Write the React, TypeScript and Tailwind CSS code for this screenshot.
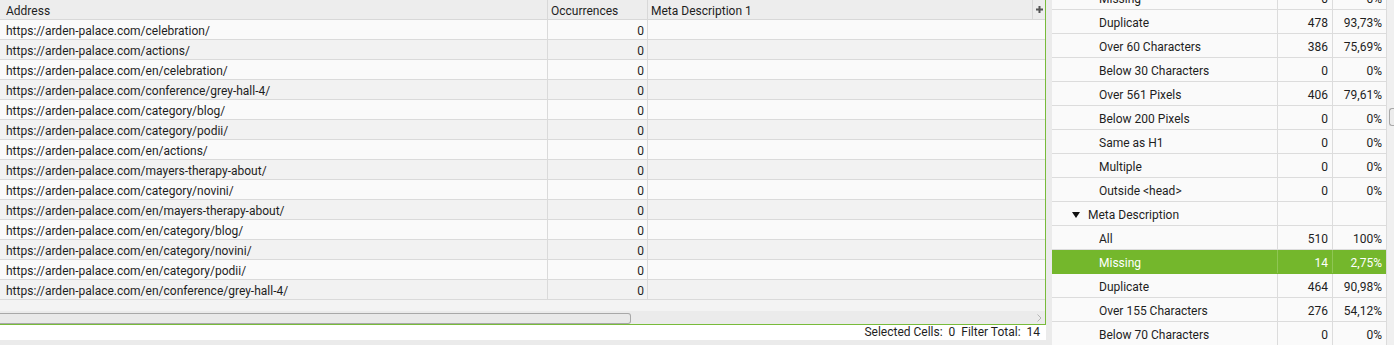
import React from "react";

const urls = [
  "https://arden-palace.com/celebration/",
  "https://arden-palace.com/actions/",
  "https://arden-palace.com/en/celebration/",
  "https://arden-palace.com/conference/grey-hall-4/",
  "https://arden-palace.com/category/blog/",
  "https://arden-palace.com/category/podii/",
  "https://arden-palace.com/en/actions/",
  "https://arden-palace.com/mayers-therapy-about/",
  "https://arden-palace.com/category/novini/",
  "https://arden-palace.com/en/mayers-therapy-about/",
  "https://arden-palace.com/en/category/blog/",
  "https://arden-palace.com/en/category/novini/",
  "https://arden-palace.com/en/category/podii/",
  "https://arden-palace.com/en/conference/grey-hall-4/",
];

type R = { label: string; count?: string; pct?: string; kind?: "child" | "group" | "sel" };

const rows: R[] = [
  { label: "Missing", count: "0", pct: "0%" },
  { label: "Duplicate", count: "478", pct: "93,73%" },
  { label: "Over 60 Characters", count: "386", pct: "75,69%" },
  { label: "Below 30 Characters", count: "0", pct: "0%" },
  { label: "Over 561 Pixels", count: "406", pct: "79,61%" },
  { label: "Below 200 Pixels", count: "0", pct: "0%" },
  { label: "Same as H1", count: "0", pct: "0%" },
  { label: "Multiple", count: "0", pct: "0%" },
  { label: "Outside <head>", count: "0", pct: "0%" },
  { label: "Meta Description", kind: "group" },
  { label: "All", count: "510", pct: "100%" },
  { label: "Missing", count: "14", pct: "2,75%", kind: "sel" },
  { label: "Duplicate", count: "464", pct: "90,98%" },
  { label: "Over 155 Characters", count: "276", pct: "54,12%" },
  { label: "Below 70 Characters", count: "0", pct: "0%" },
];

export default function App() {
  return (
    <div className="flex h-[345px] w-[1394px] overflow-hidden bg-[#ebebeb] font-['Roboto',sans-serif] text-[12px] text-[#1e1e1e]">
      {/* Left panel */}
      <div className="flex w-[1046px] flex-col">
        <div className="flex h-[325px] flex-col border-r border-b border-[#78bb3a] bg-[#f3f3f3]">
          {/* header */}
          <div className="flex h-[20px] border-b border-[#d8d8d8] bg-[#ededed] leading-[16px]">
            <div className="w-[548px] border-r border-[#d8d8d8] pt-[3px] pl-[6px]">Address</div>
            <div className="w-[100px] border-r border-[#d8d8d8] pt-[3px] pl-[3px]">Occurrences</div>
            <div className="w-[385px] border-r border-[#d8d8d8] pt-[3px] pl-[3px]">Meta Description 1</div>
            <div className="flex flex-1 items-center justify-center">
              <svg width="7" height="7" viewBox="0 0 7 7">
                <rect x="2.5" y="0" width="2" height="7" fill="#555" />
                <rect x="0" y="2.5" width="7" height="2" fill="#555" />
              </svg>
            </div>
          </div>
          {urls.map((u, i) => (
            <div
              key={i}
              className={`flex h-[20px] border-b border-[#dadada] leading-[16px] ${i % 2 === 0 ? "bg-[#fafafa]" : "bg-[#f2f2f2]"}`}
            >
              <div className="w-[548px] border-r border-[#dadada] pt-[3px] pl-[6px]">{u}</div>
              <div className="w-[100px] border-r border-[#dadada] pt-[3px] pr-[3px] text-right">0</div>
              <div className="flex-1"></div>
            </div>
          ))}
          <div className="flex-1"></div>
          {/* horizontal scrollbar */}
          <div className="flex h-[13px] items-end bg-[#ebebeb]">
            <div className="h-[11px] w-[631px] rounded-r-[3px] border border-l-0 border-[#a8a8a8] bg-[#e9e9e9]"></div>
            <div className="flex-1"></div>
            <div className="flex h-[13px] w-[12px] items-center justify-center">
              <svg width="5" height="8" viewBox="0 0 5 8">
                <path d="M0.5 0.5 L4 4 L0.5 7.5" fill="none" stroke="#b5b5b5" strokeWidth="1" />
              </svg>
            </div>
          </div>
        </div>
        <div className="flex h-[15px] items-center justify-end bg-white pr-[6px] leading-[15px] whitespace-pre">
          {"Selected Cells:  0  Filter Total:  14"}
        </div>
        <div className="flex-1"></div>
      </div>

      <div className="w-[6px]"></div>

      {/* Right panel */}
      <div className="flex flex-1">
        <div className="w-[335px] border-r border-[#dcdcdc] bg-[#fafafa]">
          <div className="mt-[-14px]">
            {rows.map((r, i) => {
              const sel = r.kind === "sel";
              const line = sel ? "border-[#8fc654]" : "border-[#dcdcdc]";
              return (
                <div
                  key={i}
                  className={`flex h-[24px] border-b leading-[20px] ${sel ? "border-[#74b72c] bg-[#74b72c] text-white" : "border-[#dcdcdc]"}`}
                >
                  {r.kind === "group" ? (
                    <div className={`flex w-[226px] items-center border-r ${line} pt-[2px] pl-[20px]`}>
                      <svg width="8" height="6" viewBox="0 0 8 6" className="mr-[8px]">
                        <path d="M0 0 L8 0 L4 6 Z" fill="#111" />
                      </svg>
                      <span className="pt-[1px]">{r.label}</span>
                    </div>
                  ) : (
                    <div className={`w-[226px] border-r ${line} pt-[3px] pl-[47px]`}>{r.label}</div>
                  )}
                  <div className={`w-[55px] border-r ${line} pt-[3px] pr-[4px] text-right`}>{r.count ?? ""}</div>
                  <div className="flex-1 pt-[3px] pr-[4px] text-right">{r.pct ?? ""}</div>
                </div>
              );
            })}
          </div>
        </div>
        <div className="flex-1 bg-[#f0f0f0] pt-[108px]">
          <div className="ml-[2px] h-[18px] rounded-l-[3px] border border-r-0 border-[#a8a8a8] bg-[#ececec]"></div>
        </div>
      </div>
    </div>
  );
}
